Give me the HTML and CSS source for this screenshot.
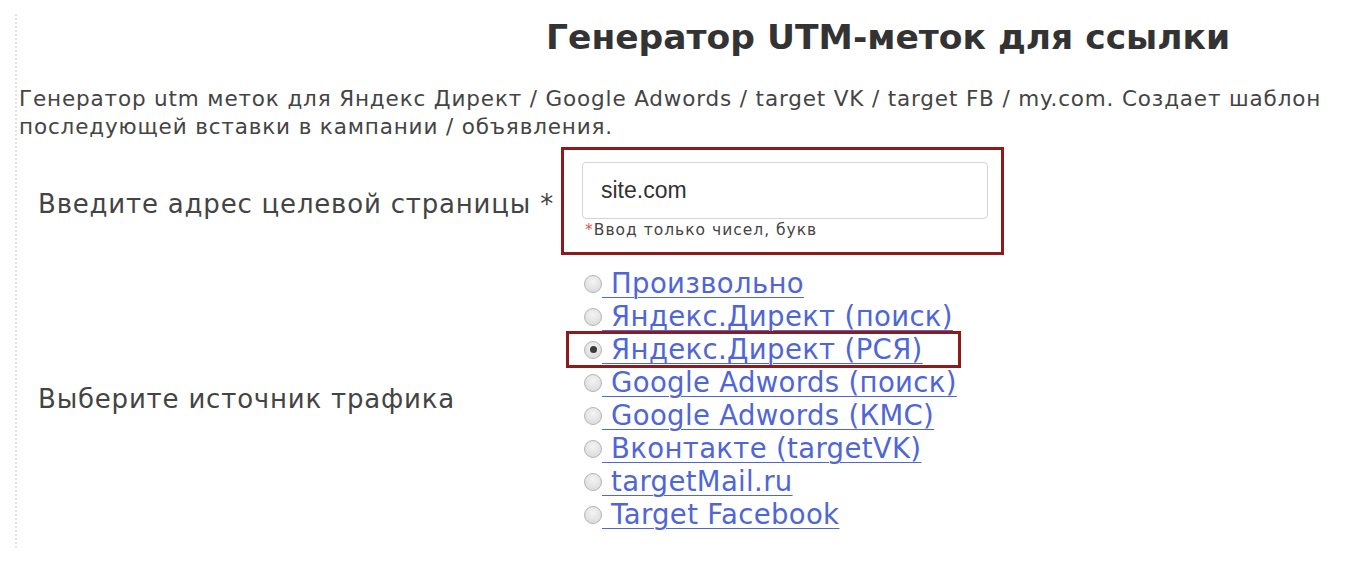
FILE: index.html
```html
<!DOCTYPE html>
<html lang="ru">
<head>
<meta charset="utf-8">
<title>Генератор UTM-меток для ссылки</title>
<link rel="stylesheet" href="styles.css">
</head>
<body>
<div class="page">
  <h1 class="title">Генератор UTM-меток для ссылки</h1>
  <p class="intro">Генератор utm меток для Яндекс Директ / Google Adwords / target VK / target FB / my.com. Создает шаблон последующей вставки в кампании / объявления.</p>
  <div class="form">
    <div class="label label-url">Введите адрес целевой страницы *</div>
    <div class="field-box">
      <div class="input">site.com</div>
      <div class="hint"><span class="req">*</span>Ввод только чисел, букв</div>
    </div>
    <div class="label">Выберите источник трафика</div>
    <div class="sources">
      <div class="source"><span class="radio"></span><a class="link" href="#">&nbsp;Произвольно</a></div>
      <div class="source"><span class="radio"></span><a class="link" href="#">&nbsp;Яндекс.Директ (поиск)</a></div>
      <div class="source selected"><span class="radio checked"></span><a class="link" href="#">&nbsp;Яндекс.Директ (РСЯ)</a></div>
      <div class="source"><span class="radio"></span><a class="link" href="#">&nbsp;Google Adwords (поиск)</a></div>
      <div class="source"><span class="radio"></span><a class="link" href="#">&nbsp;Google Adwords (КМС)</a></div>
      <div class="source"><span class="radio"></span><a class="link" href="#">&nbsp;Вконтакте (targetVK)</a></div>
      <div class="source"><span class="radio"></span><a class="link" href="#">&nbsp;targetMail.ru</a></div>
      <div class="source"><span class="radio"></span><a class="link" href="#">&nbsp;Target Facebook</a></div>
    </div>
  </div>
</div>
</body>
</html>
```
FILE: styles.css
```css
html, body {
  margin: 0;
  padding: 0;
  background: #ffffff;
}

body {
  font-family: "DejaVu Sans", Verdana, sans-serif;
  color: #444;
}

.page {
  margin: 14px 0 0 15px;
  padding: 0 0 14px 2px;
  border-left: 2px dotted #e2e2e2;
  min-height: 520px;
}

.title {
  margin: 0;
  padding: 2px 0 0 527px;
  font-family: "DejaVu Sans", Verdana, sans-serif;
  font-weight: bold;
  font-size: 34.5px;
  line-height: 42px;
  color: #333;
}

.intro {
  margin: 27px 0 0 0;
  padding-right: 20px;
  font-family: "DejaVu Sans", Verdana, sans-serif;
  font-size: 21.5px;
  letter-spacing: 0.85px;
  line-height: 28px;
  color: #444;
}

.form {
  display: grid;
  grid-template-columns: 542px auto;
  align-items: center;
  row-gap: 12px;
  margin-top: 6px;
}

.label {
  padding-left: 19px;
  font-family: "DejaVu Sans", Verdana, sans-serif;
  font-size: 26px;
  letter-spacing: 0.8px;
  color: #444;
}

.label-url {
  padding-top: 6px;
}

.field-box {
  width: 443px;
  border: 3px solid #8e1b1b;
  padding: 12px 0 0 0;
  box-sizing: border-box;
  height: 108px;
}

.input {
  margin-left: 18px;
  width: 406px;
  height: 57px;
  box-sizing: border-box;
  border: 1px solid #d4d4d4;
  border-radius: 4px;
  padding-left: 18px;
  display: flex;
  align-items: center;
  font-family: "Liberation Sans", Arial, sans-serif;
  font-size: 23px;
  color: #333;
}

.hint {
  margin: 2px 0 0 21px;
  font-family: "DejaVu Sans", Verdana, sans-serif;
  font-size: 15.5px;
  letter-spacing: 1px;
  color: #444;
}

.req {
  color: #e05555;
}

.sources {
  display: flex;
  flex-direction: column;
  align-items: flex-start;
  margin-left: 7px;
}

.source {
  display: flex;
  align-items: center;
  height: 33px;
  padding: 0 8px 0 16px;
}

.selected {
  padding-right: 36px;
  outline: 3px solid #8e1b1b;
  outline-offset: -1px;
}

.radio {
  width: 18px;
  height: 18px;
  box-sizing: border-box;
  border-radius: 50%;
  border: 1px solid #b5b5b5;
  background: radial-gradient(circle at 50% 35%, #f4f4f4 0%, #d6d6d6 100%);
  display: flex;
  align-items: center;
  justify-content: center;
  flex: none;
}

.radio.checked::after {
  content: "";
  width: 7px;
  height: 7px;
  border-radius: 50%;
  background: #3a3a3a;
}

.link {
  font-family: "DejaVu Sans", Verdana, sans-serif;
  font-size: 27.5px;
  letter-spacing: 0.35px;
  line-height: 33px;
  color: #4f66d8;
  text-decoration: underline;
  text-decoration-thickness: 1px;
  text-underline-offset: 4px;
  white-space: pre;
}
```
